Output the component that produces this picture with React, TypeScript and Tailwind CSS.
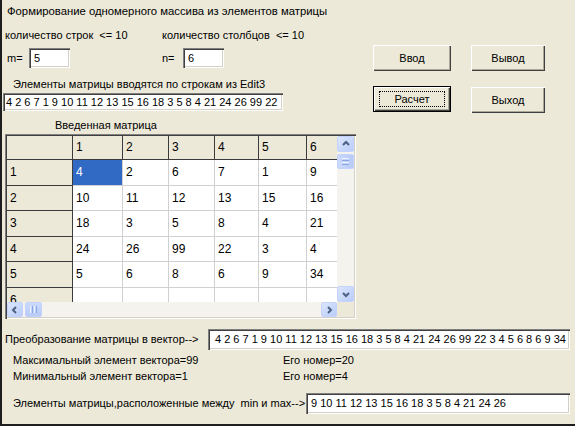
import React from "react";

const COLW = ["w-[66px]", "w-[50px]", "w-[46px]", "w-[46px]", "w-[44px]", "w-[48px]", "w-[48px]"];
const ROWH = ["h-[24px]", "h-[26px]", "h-[25px]", "h-[26px]", "h-[25px]", "h-[26px]", "h-[25px]"];

const DATA: string[][] = [
  ["4", "2", "6", "7", "1", "9"],
  ["10", "11", "12", "13", "15", "16"],
  ["18", "3", "5", "8", "4", "21"],
  ["24", "26", "99", "22", "3", "4"],
  ["5", "6", "8", "6", "9", "34"],
  ["", "", "", "", "", ""],
];

const sunken =
  "bg-white shadow-[inset_1px_1px_0_#808080,inset_2px_2px_0_#404040,inset_-1px_-1px_0_#ffffff,inset_-2px_-2px_0_#d4d0c8]";

const Edit: React.FC<{ value: string; className?: string }> = ({ value, className = "" }) => (
  <div className={`${sunken} ${className} overflow-hidden whitespace-nowrap pl-[5px] flex items-center text-[11px] text-black`}>
    {value}
  </div>
);

const Btn: React.FC<{ label: string; className?: string; def?: boolean }> = ({ label, className = "", def }) => (
  <div
    className={`${className} flex items-center justify-center bg-[#ECE9D8] text-[11px] text-black ${
      def
        ? "border border-black shadow-[inset_1px_1px_0_#ffffff,inset_-1px_-1px_0_#404040,inset_-2px_-2px_0_#aca899]"
        : "shadow-[inset_1px_1px_0_#ffffff,inset_-1px_-1px_0_#404040,inset_-2px_-2px_0_#aca899]"
    }`}
  >
    {def ? (
      <div className="border border-dotted border-black w-[66px] h-[16px] flex items-center justify-center">{label}</div>
    ) : (
      label
    )}
  </div>
);

const Arrow: React.FC<{ dir: "up" | "down" | "left" | "right" }> = ({ dir }) => {
  const pts = {
    up: "2,6 5,3 8,6",
    down: "2,4 5,7 8,4",
    left: "6,2 3,5 6,8",
    right: "4,2 7,5 4,8",
  }[dir];
  return (
    <svg width="10" height="10" viewBox="0 0 10 10">
      <polyline points={pts} fill="none" stroke="#4d6185" strokeWidth="2" />
    </svg>
  );
};

const ScrollBtn: React.FC<{ dir: "up" | "down" | "left" | "right"; className?: string }> = ({ dir, className = "" }) => (
  <div
    className={`${className} flex items-center justify-center rounded-[2px] border border-[#c3d3fd] bg-gradient-to-br from-[#dce6fd] to-[#b9cdf9]`}
  >
    <Arrow dir={dir} />
  </div>
);

const Grid: React.FC = () => (
  <div className="w-[351px] h-[185px] ml-[3px] mt-[2px] p-[2px] bg-[#ECE9D8] shadow-[inset_1px_1px_0_#808080,inset_2px_2px_0_#404040,inset_-1px_-1px_0_#ffffff,inset_-2px_-2px_0_#d4d0c8] flex flex-col">
    <div className="flex">
      <div className="w-[330px] h-[166px] overflow-hidden bg-white">
        {/* header */}
        <div className={`flex ${ROWH[0]}`}>
          {COLW.map((w, c) => (
            <div
              key={c}
              className={`${w} shrink-0 h-full bg-[#ECE9D8] border-r border-b border-[#3c3c3c] pl-[3px] pt-[4px] text-[12px] leading-[14px]`}
            >
              {c === 0 ? "" : c}
            </div>
          ))}
        </div>
        {DATA.map((row, r) => (
          <div key={r} className={`flex ${ROWH[r + 1]}`}>
            <div className={`${COLW[0]} shrink-0 h-full bg-[#ECE9D8] border-r border-b border-[#3c3c3c] pl-[3px] pt-[5px] text-[12px] leading-[14px]`}>
              {r + 1}
            </div>
            {row.map((v, c) => {
              const sel = r === 0 && c === 0;
              return (
                <div
                  key={c}
                  className={`${COLW[c + 1]} shrink-0 h-full border-r border-b border-[#d0d0d0] pl-[3px] pt-[5px] text-[12px] leading-[14px] ${
                    sel ? "bg-[#316ac5] text-white" : "bg-white text-black"
                  }`}
                >
                  {v}
                </div>
              );
            })}
          </div>
        ))}
      </div>
      {/* vertical scrollbar */}
      <div className="w-[17px] h-[166px] bg-[#f4f3ee] flex flex-col justify-between">
        <div className="flex flex-col gap-[2px]">
          <ScrollBtn dir="up" className="w-[17px] h-[16px]" />
          <div className="w-[17px] h-[15px] rounded-[2px] border border-[#c3d3fd] bg-gradient-to-r from-[#cbdafd] to-[#b8cbf7] flex flex-col items-center justify-center gap-[1px]">
            <div className="w-[7px] h-px bg-[#eef3fe]" />
            <div className="w-[7px] h-px bg-[#8ca6e0]" />
            <div className="w-[7px] h-px bg-[#eef3fe]" />
            <div className="w-[7px] h-px bg-[#8ca6e0]" />
          </div>
        </div>
        <ScrollBtn dir="down" className="w-[17px] h-[16px]" />
      </div>
    </div>
    {/* horizontal scrollbar */}
    <div className="flex h-[15px]">
      <div className="w-[330px] h-full bg-[#f4f3ee] flex justify-between">
        <div className="flex gap-[2px]">
          <ScrollBtn dir="left" className="w-[16px] h-[15px]" />
          <div className="w-[17px] h-[15px] rounded-[2px] border border-[#c3d3fd] bg-gradient-to-b from-[#cbdafd] to-[#b8cbf7] flex items-center justify-center gap-[1px]">
            <div className="h-[7px] w-px bg-[#eef3fe]" />
            <div className="h-[7px] w-px bg-[#8ca6e0]" />
            <div className="h-[7px] w-px bg-[#eef3fe]" />
            <div className="h-[7px] w-px bg-[#8ca6e0]" />
          </div>
        </div>
        <ScrollBtn dir="right" className="w-[16px] h-[15px]" />
      </div>
      <div className="w-[17px] h-full bg-[#ECE9D8]" />
    </div>
  </div>
);

export default function App() {
  return (
    <div
      className="w-[575px] h-[426px] bg-[#ECE9D8] border-l-2 border-b-2 border-[#1e1e1e] overflow-hidden text-[11px] leading-[13px] text-black"
      style={{ fontFamily: '"Liberation Sans", Arial, sans-serif' }}
    >
      <div className="flex">
        {/* left column */}
        <div className="w-[358px] shrink-0 flex flex-col">
          <div className="mt-[5px] ml-[5px] whitespace-nowrap text-[11.3px]">Формирование одномерного массива из элементов матрицы</div>
          <div className="mt-[11px] ml-[3px] flex whitespace-nowrap">
            <span className="w-[157px]">количество строк&nbsp; &lt;= 10</span>
            <span>количество столбцов&nbsp; &lt;= 10</span>
          </div>
          <div className="mt-[6px] ml-[3px] flex items-center h-[20px]">
            <span className="w-[24px] pl-[2px]">m=</span>
            <Edit value="5" className="w-[41px] h-[20px]" />
            <span className="ml-[92px] w-[21px]">n=</span>
            <Edit value="6" className="w-[41px] h-[20px]" />
          </div>
          <div className="mt-[10px] ml-[11px] whitespace-nowrap">Элементы матрицы вводятся по строкам из Edit3</div>
          <Edit
            value="4 2 6 7 1 9 10 11 12 13 15 16 18 3 5 8 4 21 24 26 99 22"
            className="mt-[2px] ml-[1px] w-[280px] h-[18px] !pl-[3px]"
          />
          <div className="mt-[8px] ml-[53px] whitespace-nowrap">Введенная матрица</div>
          <Grid />
        </div>
        {/* buttons */}
        <div className="ml-[13px] mt-[45px] grid grid-cols-[78px_74px] gap-x-[20px] gap-y-[15px] h-fit">
          <Btn label="Ввод" className="h-[26px]" />
          <Btn label="Вывод" className="h-[26px]" />
          <Btn label="Расчет" className="h-[26px]" def />
          <Btn label="Выход" className="h-[26px] mt-[1px]" />
        </div>
      </div>

      {/* bottom section */}
      <div className="mt-[10px] flex items-center h-[21px]">
        <span className="ml-[3px] w-[203px] whitespace-nowrap">Преобразование матрицы в вектор--&gt;</span>
        <Edit
          value="4 2 6 7 1 9 10 11 12 13 15 16 18 3 5 8 4 21 24 26 99 22 3 4 5 6 8 6 9 34"
          className="w-[362px] h-[21px] !pl-[7px]"
        />
      </div>
      <div className="mt-[4px] ml-[11px] flex whitespace-nowrap">
        <span className="w-[270px]">Максимальный элемент вектора=99</span>
        <span>Его номер=20</span>
      </div>
      <div className="mt-[3px] ml-[11px] flex whitespace-nowrap">
        <span className="w-[270px]">Минимальный элемент вектора=1</span>
        <span>Его номер=4</span>
      </div>
      <div className="mt-[10px] flex items-center h-[21px]">
        <span className="ml-[11px] w-[293px] whitespace-nowrap">Элементы матрицы,расположенные между&nbsp; min и max--&gt;</span>
        <Edit value="9 10 11 12 13 15 16 18 3 5 8 4 21 24 26" className="w-[264px] h-[21px]" />
      </div>
    </div>
  );
}
